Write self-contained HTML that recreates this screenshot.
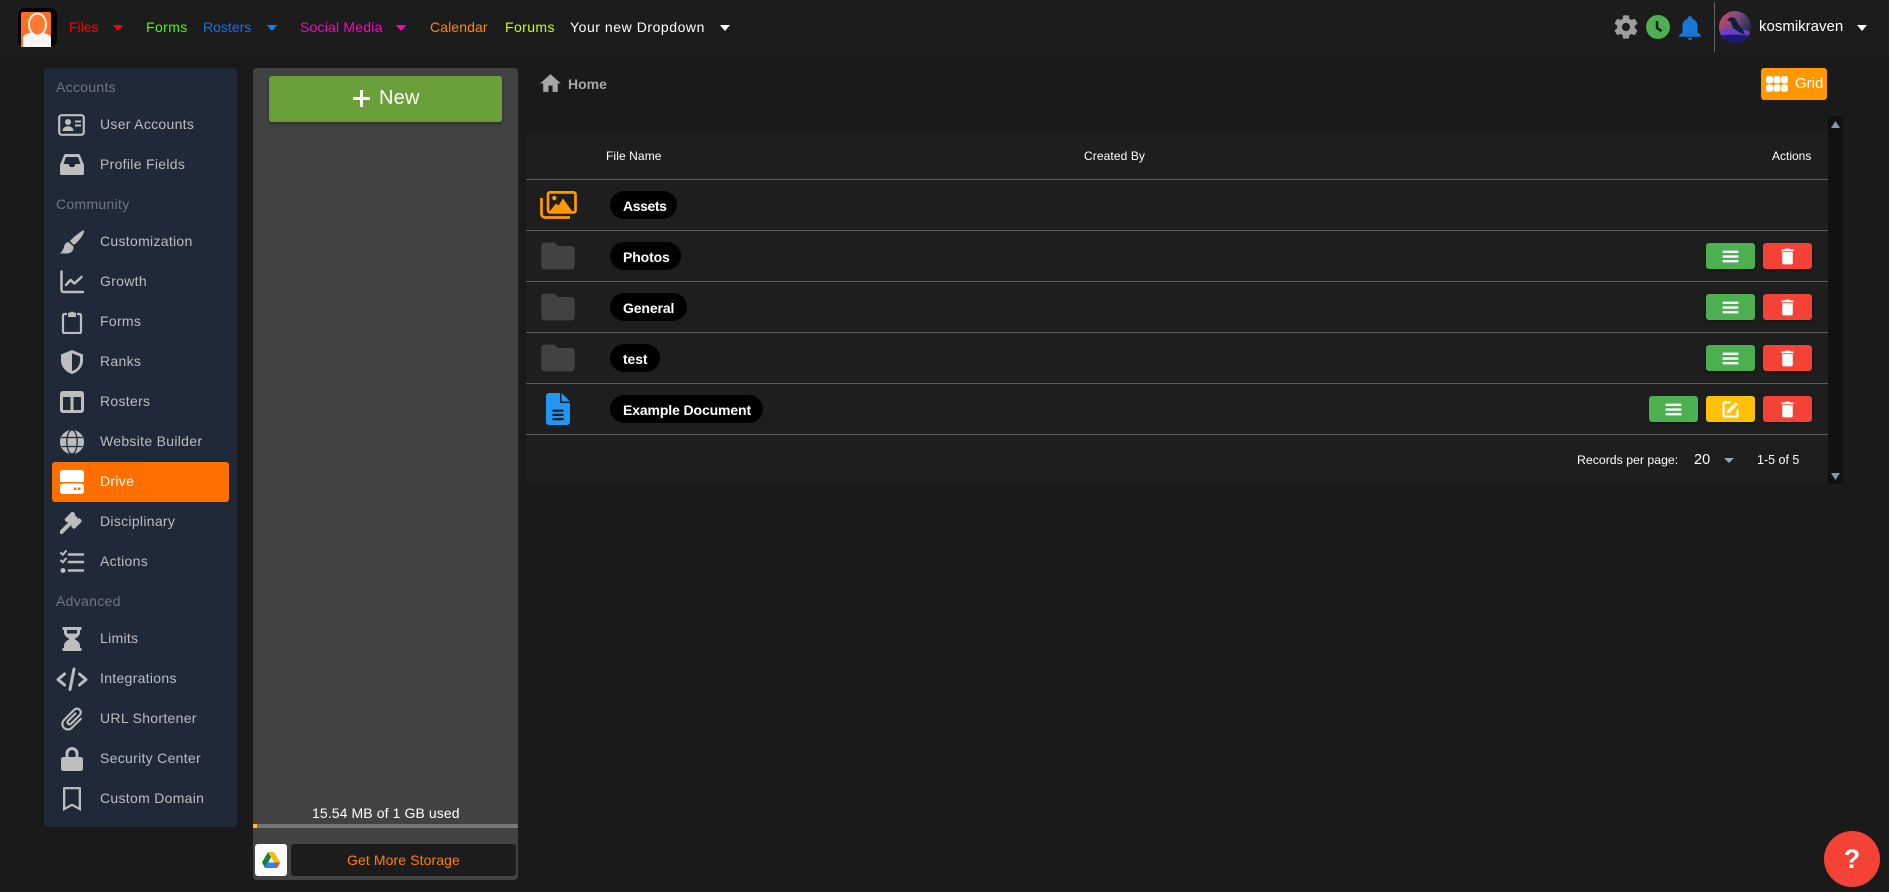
<!DOCTYPE html>
<html lang="en"><head><meta charset="utf-8"><title>Drive</title>
<style>
html,body{margin:0;padding:0;width:1889px;height:892px;overflow:hidden;background:#1a1a1a;font-family:"Liberation Sans",Arial,sans-serif;color:#fff}
.a,.t,svg{position:absolute}
.t{line-height:20px;white-space:nowrap;font-size:14px}
.n{font-size:14px}
.s{color:#6f7580;left:56px;font-size:14px;letter-spacing:.3px}
.m{color:#bdbdbd;left:100px;font-size:14px;letter-spacing:.3px}
svg.i{left:60px;width:24px;height:24px;fill:#bdbdbd}
.l{left:526px;width:1302px;height:1px;background:#5c5c5c}
.p{left:610px;height:28px;border-radius:14px;background:#000}
.f{left:623px;font-weight:bold;font-size:14px;letter-spacing:-.12px}
.b{width:49px;height:26px;border-radius:3px;box-shadow:0 1px 2px rgba(0,0,0,.4)}
.g{background:#4caf50}.r{background:#f44336}.y{background:#ffc107}
.b svg{left:14px;top:3px;width:21px;height:21px;fill:#fff}
.h{font-size:12px;color:#fff}
.tri{width:0;height:0;border-left:5px solid transparent;border-right:5px solid transparent;border-top:6px solid #fff}
</style></head><body>

<div class="a" style="left:0;top:0;width:1889px;height:52px;background:#1c1c1c"></div>

<!-- logo -->
<svg style="left:18px;top:8px" width="39" height="39" viewBox="0 0 39 39">
<rect width="39" height="39" rx="7" fill="#000"/><path d="M3 6a2 2 0 0 1 2-2h26a2 2 0 0 1 2 2v33H3z" fill="#ff6d1f"/>
<path d="M5 39V30c0-4 7-5 9-6h8c2 1 11 2 11 6v9z" fill="#f6f6f6"/>
<ellipse cx="19.500" cy="16.500" rx="9.500" ry="12" fill="#f6f6f6"/><ellipse cx="19.500" cy="16.500" rx="7.600" ry="10" fill="#ff7a30"/></svg>

<span class="t n" style="left:69px;top:17px;color:#ff0000">Files</span><div class="a tri" style="left:113px;top:25px;border-top-color:#ff0000"></div>
<span class="t n" style="left:146px;top:17px;color:#44ff00;letter-spacing:.4px">Forms</span>
<span class="t n" style="left:203px;top:17px;color:#0a70ff">Rosters</span><div class="a tri" style="left:267px;top:25px;border-top-color:#0a80ff"></div>
<span class="t n" style="left:300px;top:17px;color:#ff00c8;letter-spacing:.2px">Social Media</span><div class="a tri" style="left:396px;top:25px;border-top-color:#ff00c8"></div>
<span class="t n" style="left:430px;top:17px;color:#ff8800;letter-spacing:.1px">Calendar</span>
<span class="t n" style="left:505px;top:17px;color:#ccff00;letter-spacing:.4px">Forums</span>
<span class="t n" style="left:570px;top:17px;letter-spacing:.55px">Your new Dropdown</span><div class="a tri" style="left:720px;top:25px"></div>

<!-- top right -->
<svg style="left:1612px;top:13px;fill:#9e9e9e" width="28" height="28" viewBox="0 0 24 24"><path d="M12,15.5A3.5,3.5 0 0,1 8.5,12A3.5,3.5 0 0,1 12,8.5A3.5,3.5 0 0,1 15.5,12A3.5,3.5 0 0,1 12,15.5M19.43,12.97C19.47,12.65 19.5,12.33 19.5,12C19.5,11.67 19.47,11.34 19.43,11L21.54,9.37C21.73,9.22 21.78,8.95 21.66,8.73L19.66,5.27C19.54,5.05 19.27,4.96 19.05,5.05L16.56,6.05C16.04,5.66 15.5,5.32 14.87,5.07L14.5,2.42C14.46,2.18 14.25,2 14,2H10C9.75,2 9.54,2.18 9.5,2.42L9.13,5.07C8.5,5.32 7.96,5.66 7.44,6.05L4.95,5.05C4.73,4.96 4.46,5.05 4.34,5.27L2.34,8.73C2.21,8.95 2.27,9.22 2.46,9.37L4.57,11C4.53,11.34 4.5,11.67 4.5,12C4.5,12.33 4.53,12.65 4.57,12.97L2.46,14.63C2.27,14.78 2.21,15.05 2.34,15.27L4.34,18.73C4.46,18.95 4.73,19.03 4.95,18.95L7.44,17.94C7.96,18.34 8.5,18.68 9.13,18.93L9.5,21.58C9.54,21.82 9.75,22 10,22H14C14.25,22 14.46,21.82 14.5,21.58L14.87,18.93C15.5,18.67 16.04,18.34 16.56,17.94L19.05,18.95C19.27,19.03 19.54,18.95 19.66,18.73L21.66,15.27C21.78,15.05 21.73,14.78 21.54,14.63L19.43,12.97Z"/></svg>
<svg style="left:1646px;top:15px" width="24" height="24" viewBox="0 0 24 24"><circle cx="12" cy="12" r="12" fill="#4caf50"/><path d="M11 6v7l4.500 3" fill="none" stroke="#1c1c1c" stroke-width="2.400"/></svg>
<svg style="left:1677px;top:14px;fill:#1976d2" width="26" height="26" viewBox="0 0 24 24"><path d="M22,19.500V21H2V19.500L5,17V11C5,7.900 7.030,5.170 10,4.290C10,4.190 10,4.100 10,4A2,2 0 0,1 12,2A2,2 0 0,1 14,4C14,4.100 14,4.190 14,4.290C16.970,5.170 19,7.900 19,11V17L22,19.500M14,22A2,2 0 0,1 12,24A2,2 0 0,1 10,22"/></svg>
<div class="a" style="left:1714px;top:2px;width:1px;height:50px;background:#666"></div>
<svg style="left:1719px;top:11px" width="32" height="32" viewBox="0 0 32 32">
<defs><linearGradient id="av" x1="0" y1="0" x2="1" y2=".6"><stop offset="0" stop-color="#e0445a"/><stop offset=".5" stop-color="#7a4a80"/><stop offset="1" stop-color="#1a2a44"/></linearGradient><clipPath id="ac"><circle cx="16" cy="16" r="16"/></clipPath></defs>
<g clip-path="url(#ac)"><rect width="32" height="32" fill="url(#av)"/><path d="M0 20c8-3 22-3 32 1v11H0z" fill="#6a3fd0"/><path d="M0 25c8-2 22-2 32 0v7H0z" fill="#1c1a70"/><path d="M8 9l4-3 4 1 3 6 5 6 2 5-6-3-6-4-2-6z" fill="#101c38"/></g></svg>
<span class="t" style="left:1759px;top:17px;font-size:15px">kosmikraven</span><div class="a tri" style="left:1857px;top:25px"></div>

<!-- sidebar -->
<div class="a" style="left:44px;top:68px;width:193px;height:759px;border-radius:4px;background:#1f2937"></div>
<div class="a" style="left:52px;top:462px;width:177px;height:40px;border-radius:3px;background:#ff6f00"></div>

<span class="t s" style="top:77px">Accounts</span>
<svg class="i" style="top:114px;left:58px;width:27px;height:22px" viewBox="0 0 27 22"><rect x="1.200" y="1.200" width="24.600" height="19.600" rx="2.500" fill="none" stroke="#bdbdbd" stroke-width="2.200"/><circle cx="10" cy="8" r="3"/><path d="M4.500 17c0-3 2.500-4.800 5.500-4.800s5.500 1.800 5.500 4.800z"/><path d="M17 6.500h6v2h-6zM17 10.500h6v2h-6z"/></svg>
<span class="t m" style="top:114px">User Accounts</span>
<svg class="i" style="top:153px" viewBox="0 0 24 24"><path fill-rule="evenodd" d="M5.500 1h13a1.500 1.500 0 0 1 1.400 1L24 12v8a2 2 0 0 1-2 2H2a2 2 0 0 1-2-2v-8L4.100 2a1.500 1.500 0 0 1 1.400-1z M6 4L3.500 11h5l1.500 3h4l1.500-3h5L18 4z"/></svg>
<span class="t m" style="top:154px">Profile Fields</span>

<span class="t s" style="top:194px">Community</span>
<svg class="i" style="top:230px" viewBox="0 0 24 24"><path d="M23 .5c-2 1-8 5-13 10.500l4 4c5-4 9-9.500 10-13 .3-1.300-.2-2-1-1.500z"/><path d="M8.500 12c-3 .5-4 2.500-4.500 5-.3 1.500-2 4.500-4 6.500h7c4 0 7-3 6.500-7z"/></svg>
<span class="t m" style="top:231px">Customization</span>
<svg class="i" style="top:270px" viewBox="0 0 24 24"><path fill="none" stroke="#bdbdbd" stroke-width="2.500" stroke-linecap="round" stroke-linejoin="round" d="M1.500 1.500V20a2 2 0 0 0 2 2H23 M6 15l4.500-5 4 3.500L21.500 7"/></svg>
<span class="t m" style="top:271px">Growth</span>
<svg class="i" style="top:310px" viewBox="0 0 24 24"><path fill="none" stroke="#bdbdbd" stroke-width="2.200" stroke-linejoin="round" d="M7 4H4.500a1.500 1.500 0 0 0-1.500 1.500V22a1 1 0 0 0 1 1H20a1 1 0 0 0 1-1V5.500A1.500 1.500 0 0 0 19.500 4H17"/><path d="M9 2.500h1.500a1.600 1.600 0 0 1 3 0H15a1 1 0 0 1 1 1V7H8V3.500a1 1 0 0 1 1-1z"/></svg>
<span class="t m" style="top:311px">Forms</span>
<svg class="i" style="top:350px" viewBox="0 0 24 24"><path fill-rule="evenodd" d="M12 0L1 4.500v6C1 16.500 5.500 22 12 24c6.500-2 11-7.500 11-13.500v-6z M12 3.200l8 3.300V11c0 4.500-3.200 8.600-8 10z"/></svg>
<span class="t m" style="top:351px">Ranks</span>
<svg class="i" style="top:390px" viewBox="0 0 24 24"><path fill-rule="evenodd" d="M3 1h18a3 3 0 0 1 3 3v16a3 3 0 0 1-3 3H3a3 3 0 0 1-3-3V4a3 3 0 0 1 3-3z M3 7v13h7.500V7z M13.500 7v13H21V7z"/></svg>
<span class="t m" style="top:391px">Rosters</span>
<svg class="i" style="top:430px" viewBox="0 0 24 24"><circle cx="12" cy="12" r="12"/><g fill="none" stroke="#1f2937" stroke-width="1.300"><ellipse cx="12" cy="12" rx="5.200" ry="12"/><path d="M1.500 7.500h21M1.500 16.500h21"/></g></svg>
<span class="t m" style="top:431px">Website Builder</span>
<svg class="i" style="top:470px;fill:#fff" viewBox="0 0 24 24"><path d="M3 0h18a3 3 0 0 1 3 3v9H0V3a3 3 0 0 1 3-3z"/><rect y="13.500" width="24" height="10.500" rx="3.200"/><rect x="14" y="17.500" width="2.500" height="2.500" fill="#ff6f00"/><rect x="18" y="17.500" width="2.500" height="2.500" fill="#ff6f00"/></svg>
<span class="t m" style="top:471px;color:#fff">Drive</span>
<svg class="i" style="top:510px" viewBox="0 0 24 24"><path transform="translate(-1.500 1)" d="M2.300,20.280L11.900,10.680L10.500,9.260L9.780,9.970C9.390,10.360 8.760,10.360 8.370,9.970L7.660,9.260C7.270,8.870 7.270,8.240 7.660,7.850L13.320,2.190C13.710,1.800 14.340,1.800 14.730,2.190L15.440,2.900C15.830,3.290 15.830,3.920 15.440,4.310L14.730,5L16.150,6.430C16.540,6.040 17.170,6.040 17.560,6.430C17.950,6.820 17.950,7.460 17.560,7.850L18.970,9.260L19.680,8.550C20.070,8.160 20.710,8.160 21.100,8.550L21.800,9.260C22.190,9.650 22.190,10.290 21.800,10.680L16.150,16.330C15.760,16.720 15.120,16.720 14.730,16.330L14.030,15.630C13.630,15.240 13.630,14.600 14.030,14.210L14.730,13.500L13.320,12.090L3.710,21.700C3.320,22.090 2.690,22.090 2.300,21.700C1.910,21.310 1.910,20.670 2.300,20.280Z" stroke="#bdbdbd" stroke-width="2"/></svg>
<span class="t m" style="top:511px">Disciplinary</span>
<svg class="i" style="top:550px" viewBox="0 0 24 24"><g fill="none" stroke="#bdbdbd" stroke-width="2.600" stroke-linecap="round"><path d="M9 4.500h14M9 12h14M9 20.500h14"/><path stroke-width="2" d="M1 3l1.800 1.800L6 1M1 10.500l1.800 1.800L6 8.500"/></g><circle cx="3" cy="20.500" r="2.500"/></svg>
<span class="t m" style="top:551px">Actions</span>

<span class="t s" style="top:591px">Advanced</span>
<svg class="i" style="top:627px" viewBox="0 0 24 24"><path fill-rule="evenodd" d="M2.500 0h19v3H20v2.500c0 3-3 5-5.500 6.500 2.500 1.500 5.500 3.500 5.500 6.500V21h1.500v3h-19v-3H4v-2.500c0-3 3-5 5.500-6.500C7 10.500 4 8.500 4 5.500V3H2.500z M7 3v2c0 .6.100 1.100.3 1.500h9.400c.2-.4.300-.9.300-1.500V3z"/></svg>
<span class="t m" style="top:628px">Limits</span>
<svg class="i" style="top:667px;left:56px;width:32px" viewBox="0 0 32 24"><path fill="none" stroke="#bdbdbd" stroke-width="3" stroke-linecap="round" stroke-linejoin="round" d="M8.500 7L2 12.500l6.500 5.500M23.500 7l6.500 5.500-6.500 5.500M18 2L14 22.500"/></svg>
<span class="t m" style="top:668px">Integrations</span>
<svg class="i" style="top:705px;left:58px;width:28px;height:28px" viewBox="0 0 24 24"><path transform="rotate(45 12 12)" stroke="#bdbdbd" stroke-width=".4" d="M16.500,6V17.500A4,4 0 0,1 12.500,21.500A4,4 0 0,1 8.500,17.500V5A2.500,2.500 0 0,1 11,2.500A2.500,2.500 0 0,1 13.500,5V15.500A1,1 0 0,1 12.500,16.500A1,1 0 0,1 11.500,15.500V6H10V15.500A2.500,2.500 0 0,0 12.500,18A2.500,2.500 0 0,0 15,15.500V5A4,4 0 0,0 11,1A4,4 0 0,0 7,5V17.500A5.500,5.500 0 0,0 12.500,23A5.500,5.500 0 0,0 18,17.500V6H16.500Z"/></svg>
<span class="t m" style="top:708px">URL Shortener</span>
<svg class="i" style="top:747px" viewBox="0 0 24 24"><path fill-rule="evenodd" d="M12 0a6.500 6.500 0 0 0-6.500 6.500V10H3.500a2.500 2.500 0 0 0-2.500 2.500v9A2.500 2.500 0 0 0 3.500 24h17a2.500 2.500 0 0 0 2.500-2.500v-9a2.500 2.500 0 0 0-2.500-2.500h-2V6.500A6.500 6.500 0 0 0 12 0zm0 3a3.500 3.500 0 0 1 3.500 3.500V10h-7V6.500A3.500 3.500 0 0 1 12 3z"/></svg>
<span class="t m" style="top:748px">Security Center</span>
<svg class="i" style="top:787px" viewBox="0 0 24 24"><path fill-rule="evenodd" d="M4 0h16a1 1 0 0 1 1 1v23l-9-5-9 5V1a1 1 0 0 1 1-1z M5.300 2.200v18l6.700-3.700 6.700 3.700v-18z"/></svg>
<span class="t m" style="top:788px">Custom Domain</span>

<!-- middle panel -->
<div class="a" style="left:253px;top:68px;width:265px;height:812px;border-radius:4px;background:#424242"></div>
<div class="a" style="left:269px;top:76px;width:233px;height:46px;border-radius:3px;background:#689f38;box-shadow:0 2px 3px rgba(0,0,0,.35)"></div>
<svg style="left:353px;top:90px" width="17" height="17" viewBox="0 0 17 17"><path d="M7 0h3v7h7v3h-7v7H7v-7H0V7h7z" fill="#fff"/></svg>
<span class="t" style="left:379px;top:88px;font-size:20px;letter-spacing:.2px">New</span>
<span class="t" style="left:312px;top:803px;font-size:14px;letter-spacing:.1px">15.54 MB of 1 GB used</span>
<div class="a" style="left:253px;top:824px;width:265px;height:4px;background:#757575"></div>
<div class="a" style="left:253px;top:824px;width:4px;height:4px;background:#ffc107"></div>
<div class="a" style="left:255px;top:844px;width:32px;height:32px;border-radius:3px;background:#fff"></div>
<svg style="left:262px;top:852px" width="18" height="16" viewBox="0 0 18 16"><path d="M6 0h6l6 10.500h-6z" fill="#fbbc04"/><path d="M6 0L0 10.500 3 16l6-10.800z" fill="#188038"/><path d="M3 16h12l3-5.500H6z" fill="#2684fc"/><path d="M15 16l3-5.500h-5z" fill="#ea4335"/></svg>
<div class="a" style="left:291px;top:844px;width:225px;height:32px;border-radius:3px;background:#1c1c1c"></div>
<span class="t" style="left:291px;width:225px;text-align:center;top:850px;color:#ff8000;letter-spacing:.1px">Get More Storage</span>

<!-- breadcrumb -->
<svg style="left:538px;top:71px;fill:#a6a6a6" width="25" height="25" viewBox="0 0 24 24"><path d="M10,20V14H14V20H19V12H22L12,3L2,12H5V20H10Z"/></svg>
<span class="t" style="left:568px;top:74px;font-weight:bold;color:#a6a6a6">Home</span>
<div class="a" style="left:1761px;top:68px;width:66px;height:32px;border-radius:3px;background:#ff9800"></div>
<svg style="left:1766px;top:76px;fill:#fff" width="22" height="16" viewBox="0 0 22 16"><rect width="7" height="7.400" rx="2.500"/><rect x="7.500" width="7" height="7.400" rx="2.500"/><rect x="15" width="7" height="7.400" rx="2.500"/><rect y="8.400" width="7" height="7.400" rx="2.500"/><rect x="7.500" y="8.400" width="7" height="7.400" rx="2.500"/><rect x="15" y="8.400" width="7" height="7.400" rx="2.500"/></svg>
<span class="t" style="left:1795px;top:74px;font-size:15px">Grid</span>

<!-- table -->
<div class="a" style="left:526px;top:132px;width:1302px;height:352px;background:#1e1e1e"></div>
<div class="a" style="left:1828px;top:116px;width:15px;height:368px;background:#111"></div>
<svg style="left:1831px;top:121px" width="9" height="7" viewBox="0 0 9 7"><path d="M4.500 0L9 7H0z" fill="#8a9aa5"/></svg>
<svg style="left:1831px;top:473px" width="9" height="7" viewBox="0 0 9 7"><path d="M4.500 7L9 0H0z" fill="#8a9aa5"/></svg>

<span class="t h" style="left:606px;top:146px;letter-spacing:.1px">File Name</span>
<span class="t h" style="left:1084px;top:146px;letter-spacing:.1px">Created By</span>
<span class="t h" style="left:1772px;top:146px">Actions</span>

<div class="a l" style="top:179px"></div><div class="a l" style="top:230px"></div><div class="a l" style="top:281px"></div><div class="a l" style="top:332px"></div><div class="a l" style="top:383px"></div><div class="a l" style="top:434px"></div>

<!-- rows -->
<svg style="left:540px;top:191px" width="37" height="28" viewBox="0 0 37 28"><g fill="none" stroke="#ff9800" stroke-width="2.700"><rect x="8" y="1.400" width="27.500" height="20" rx="2"/><path d="M1.500 7v16a3.500 3.500 0 0 0 3.500 3.500h25"/></g><path d="M10 20L16 12.500l2.500 2L23 7.500 32 20z" fill="#ff9800"/><circle cx="14.300" cy="7" r="2.200" fill="#ff9800"/></svg>
<div class="a p" style="top:191px;width:67px"></div><span class="t f" style="top:196px;letter-spacing:-.4px">Assets</span>

<svg class="fo" style="left:538px;top:236px;fill:#424242" width="40" height="40" viewBox="0 0 24 24"><path d="M10,4H4C2.890,4 2,4.890 2,6V18A2,2 0 0,0 4,20H20A2,2 0 0,0 22,18V8C22,6.890 21.100,6 20,6H12L10,4Z"/></svg>
<div class="a p" style="top:242px;width:71px"></div><span class="t f" style="top:247px">Photos</span>
<div class="a b g" style="left:1706px;top:243px"><svg viewBox="0 0 24 24"><path d="M3,5.300H21V8H3V5.300M3,10.700H21V13.400H3V10.700M3,16H21V18.700H3V16Z"/></svg></div>
<div class="a b r" style="left:1763px;top:243px"><svg viewBox="0 0 24 24"><path d="M19,4H15.500L14.500,3H9.500L8.500,4H5V6H19M6,19A2,2 0 0,0 8,21H16A2,2 0 0,0 18,19V7H6V19Z"/></svg></div>

<svg style="left:538px;top:287px;fill:#424242" width="40" height="40" viewBox="0 0 24 24"><path d="M10,4H4C2.890,4 2,4.890 2,6V18A2,2 0 0,0 4,20H20A2,2 0 0,0 22,18V8C22,6.890 21.100,6 20,6H12L10,4Z"/></svg>
<div class="a p" style="top:293px;width:77px"></div><span class="t f" style="top:298px">General</span>
<div class="a b g" style="left:1706px;top:294px"><svg viewBox="0 0 24 24"><path d="M3,5.300H21V8H3V5.300M3,10.700H21V13.400H3V10.700M3,16H21V18.700H3V16Z"/></svg></div>
<div class="a b r" style="left:1763px;top:294px"><svg viewBox="0 0 24 24"><path d="M19,4H15.500L14.500,3H9.500L8.500,4H5V6H19M6,19A2,2 0 0,0 8,21H16A2,2 0 0,0 18,19V7H6V19Z"/></svg></div>

<svg style="left:538px;top:338px;fill:#424242" width="40" height="40" viewBox="0 0 24 24"><path d="M10,4H4C2.890,4 2,4.890 2,6V18A2,2 0 0,0 4,20H20A2,2 0 0,0 22,18V8C22,6.890 21.100,6 20,6H12L10,4Z"/></svg>
<div class="a p" style="top:344px;width:50px"></div><span class="t f" style="top:349px">test</span>
<div class="a b g" style="left:1706px;top:345px"><svg viewBox="0 0 24 24"><path d="M3,5.300H21V8H3V5.300M3,10.700H21V13.400H3V10.700M3,16H21V18.700H3V16Z"/></svg></div>
<div class="a b r" style="left:1763px;top:345px"><svg viewBox="0 0 24 24"><path d="M19,4H15.500L14.500,3H9.500L8.500,4H5V6H19M6,19A2,2 0 0,0 8,21H16A2,2 0 0,0 18,19V7H6V19Z"/></svg></div>

<svg style="left:546px;top:393px" width="24" height="32" viewBox="0 0 24 32"><path d="M3 0h11v10h10v19a3 3 0 0 1-3 3H3a3 3 0 0 1-3-3V3a3 3 0 0 1 3-3z" fill="#2196f3"/><path d="M15.500 0L24 8.500h-8.500z" fill="#2196f3"/><path d="M6.500 16.600h11v2.200h-11zM6.500 20.800h11v2.200h-11zM6.500 25h11v2.200h-11z" fill="#1c1c1c"/></svg>
<div class="a p" style="top:395px;width:153px"></div><span class="t f" style="top:400px">Example Document</span>
<div class="a b g" style="left:1649px;top:396px"><svg viewBox="0 0 24 24"><path d="M3,5.300H21V8H3V5.300M3,10.700H21V13.400H3V10.700M3,16H21V18.700H3V16Z"/></svg></div>
<div class="a b y" style="left:1706px;top:396px"><svg viewBox="0 0 24 24"><path stroke="#fff" stroke-width=".5" d="M5,3C3.890,3 3,3.890 3,5V19A2,2 0 0,0 5,21H19A2,2 0 0,0 21,19V12H19V19H5V5H12V3H5M17.780,4C17.610,4 17.430,4.070 17.300,4.200L16.080,5.410L18.580,7.910L19.800,6.700C20.060,6.440 20.060,6 19.800,5.750L18.250,4.200C18.120,4.070 17.950,4 17.780,4M15.370,6.120L8,13.500V16H10.500L17.870,8.620L15.370,6.120Z"/></svg></div>
<div class="a b r" style="left:1763px;top:396px"><svg viewBox="0 0 24 24"><path d="M19,4H15.500L14.500,3H9.500L8.500,4H5V6H19M6,19A2,2 0 0,0 8,21H16A2,2 0 0,0 18,19V7H6V19Z"/></svg></div>

<span class="t h" style="left:1577px;top:450px;font-size:12.300px">Records per page:</span>
<span class="t" style="left:1694px;top:450px;font-size:14.500px">20</span>
<svg style="left:1724px;top:458px" width="10" height="5" viewBox="0 0 10 5"><path d="M0 0h10L5 5z" fill="#9aa5ad"/></svg>
<span class="t h" style="left:1757px;top:450px;font-size:12.500px">1-5 of 5</span>

<!-- help -->
<div class="a" style="left:1824px;top:831px;width:56px;height:56px;border-radius:50%;background:#f44336"></div>
<span class="t" style="left:1824px;width:56px;text-align:center;top:849px;font-size:27px;font-weight:bold">?</span>
</body></html>
